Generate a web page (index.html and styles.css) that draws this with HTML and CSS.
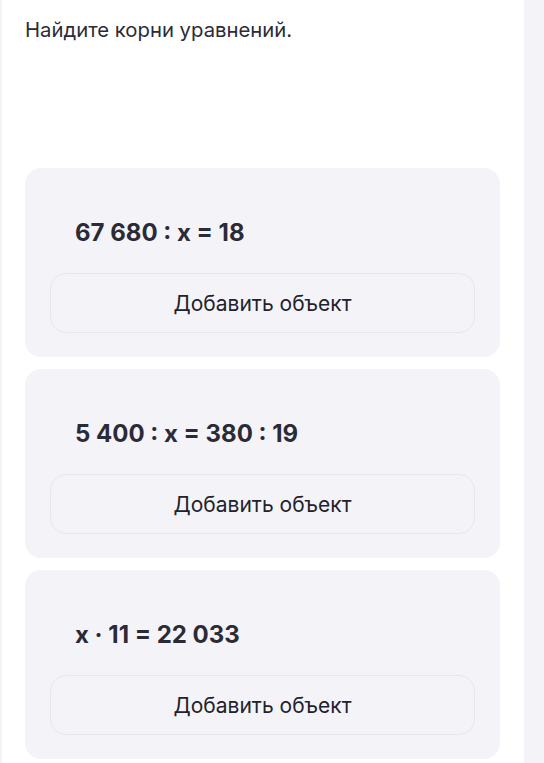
FILE: index.html
```html
<!DOCTYPE html>
<html lang="ru">
<head>
    <meta charset="UTF-8">
    <meta name="viewport" content="width=device-width, initial-scale=1.0">
    <title>Найдите корни уравнений</title>
    <link rel="stylesheet" href="styles.css">
</head>
<body>
    <div class="page">
        <div class="task">
            <p class="task-title">Найдите корни уравнений.</p>

            <div class="eq-card">
                <div class="eq-text">67 680 : x = 18</div>
                <button class="add-btn">Добавить объект</button>
            </div>

            <div class="eq-card">
                <div class="eq-text">5 400 : x = 380 : 19</div>
                <button class="add-btn">Добавить объект</button>
            </div>

            <div class="eq-card">
                <div class="eq-text">x · 11 = 22 033</div>
                <button class="add-btn">Добавить объект</button>
            </div>
        </div>
        <div class="side"></div>
    </div>
</body>
</html>
```

FILE: styles.css
```css
body {
    margin: 0;
    font-family: Inter, "Noto Sans", Arial, sans-serif;
    background-color: #ffffff;
    color: #2b2b37;
}
.page {
    display: flex;
    min-height: 763px;
}
.task {
    width: 524px;
    border-left: 2px solid #f4f4f8;
    padding: 18px 0 0 23px;
    box-sizing: border-box;
}
.task-title {
    margin: 0 0 126px;
    font-size: 20.3px;
    line-height: 24px;
}
.eq-card {
    width: 475px;
    box-sizing: border-box;
    margin-bottom: 12px;
    padding: 50px 25px 24px;
    background-color: #f4f4f8;
    border-radius: 16px;
}
.eq-text {
    padding-left: 25px;
    font-size: 24px;
    font-weight: 700;
    line-height: 30px;
    margin-bottom: 25px;
}
.add-btn {
    display: block;
    width: 100%;
    height: 60px;
    font-family: inherit;
    font-size: 21px;
    color: #22222c;
    background-color: #f4f4f8;
    border: 1px solid #e6e6ec;
    border-radius: 16px;
}
.side {
    flex: 1;
    background-color: #f4f4f8;
}
```
